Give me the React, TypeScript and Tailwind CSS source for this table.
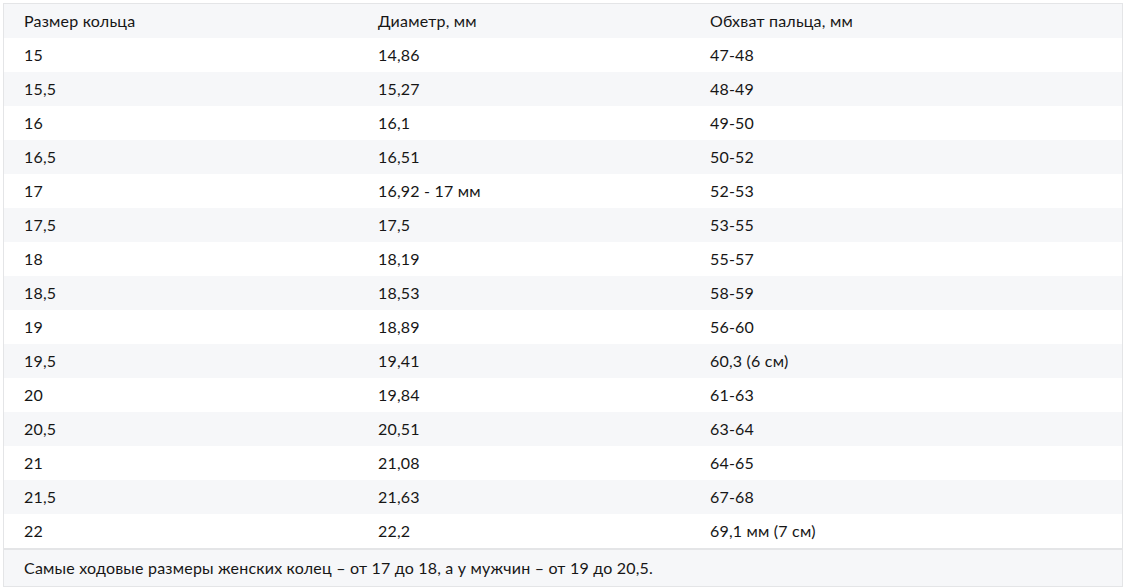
import React from "react";

const rows: [string, string, string][] = [
  ["15", "14,86", "47-48"],
  ["15,5", "15,27", "48-49"],
  ["16", "16,1", "49-50"],
  ["16,5", "16,51", "50-52"],
  ["17", "16,92 - 17 мм", "52-53"],
  ["17,5", "17,5", "53-55"],
  ["18", "18,19", "55-57"],
  ["18,5", "18,53", "58-59"],
  ["19", "18,89", "56-60"],
  ["19,5", "19,41", "60,3 (6 см)"],
  ["20", "19,84", "61-63"],
  ["20,5", "20,51", "63-64"],
  ["21", "21,08", "64-65"],
  ["21,5", "21,63", "67-68"],
  ["22", "22,2", "69,1 мм (7 см)"],
];

export default function App() {
  return (
    <div className="w-[1125px] h-[588px] bg-white pt-[3px] pl-[3px]" style={{ fontFamily: "Lato, 'Noto Sans', sans-serif" }}>
      <div className="w-[1120px] border border-[#e4e5e7] text-[16px] tracking-[0.2px] text-[#161616]">
        {[["Размер кольца", "Диаметр, мм", "Обхват пальца, мм"] as [string, string, string], ...rows].map((r, i) => (
          <div key={i} className={`flex h-[34px] items-center ${i % 2 === 0 ? "bg-[#f6f7f9]" : "bg-white"}`}>
            <div className="w-[353px] pl-[20px]">{r[0]}</div>
            <div className="w-[332px] pl-[21px]">{r[1]}</div>
            <div className="flex-1 pl-[21px]">{r[2]}</div>
          </div>
        ))}
        <div className="flex h-[38px] items-center border-t-2 border-[#e4e5e7] bg-[#f6f7f9] pl-[20px]">
          Самые ходовые размеры женских колец – от 17 до 18, а у мужчин – от 19 до 20,5.
        </div>
      </div>
    </div>
  );
}
